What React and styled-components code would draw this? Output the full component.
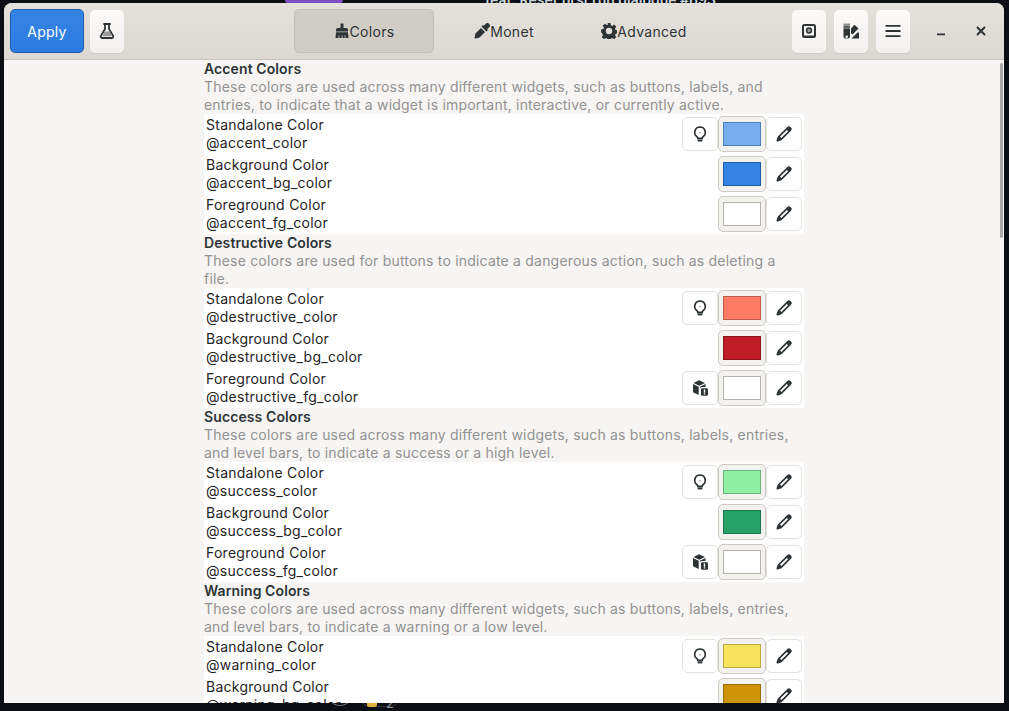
import React from 'react';
import styled, { createGlobalStyle } from 'styled-components';

const GlobalStyle = createGlobalStyle`
html, body {
    margin: 0;
    padding: 0;
    height: 100%;
    background: #0b0e13;
    overflow: hidden;
    font-family: Inter, "Noto Sans", sans-serif;
}
`;

const sections = [
    {
        title: 'Accent Colors',
        desc: 'These colors are used across many different widgets, such as buttons, labels, and entries, to indicate that a widget is important, interactive, or currently active.',
        rows: [
            { name: 'Standalone Color', variable: '@accent_color', hint: 'bulb', color: '#78aeed', edge: '#4a7fb8' },
            { name: 'Background Color', variable: '@accent_bg_color', color: '#3584e4', edge: '#1f5ca8' },
            { name: 'Foreground Color', variable: '@accent_fg_color', color: '#ffffff', edge: '#b5b3b0' },
        ],
    },
    {
        title: 'Destructive Colors',
        desc: 'These colors are used for buttons to indicate a dangerous action, such as deleting a file.',
        rows: [
            { name: 'Standalone Color', variable: '@destructive_color', hint: 'bulb', color: '#ff7b63', edge: '#c05c4a' },
            { name: 'Background Color', variable: '@destructive_bg_color', color: '#c01c28', edge: '#8c141d' },
            { name: 'Foreground Color', variable: '@destructive_fg_color', hint: 'box', color: '#ffffff', edge: '#b5b3b0' },
        ],
    },
    {
        title: 'Success Colors',
        desc: 'These colors are used across many different widgets, such as buttons, labels, entries, and level bars, to indicate a success or a high level.',
        rows: [
            { name: 'Standalone Color', variable: '@success_color', hint: 'bulb', color: '#8ff0a4', edge: '#6bb47b' },
            { name: 'Background Color', variable: '@success_bg_color', color: '#26a269', edge: '#1b774d' },
            { name: 'Foreground Color', variable: '@success_fg_color', hint: 'box', color: '#ffffff', edge: '#b5b3b0' },
        ],
    },
    {
        title: 'Warning Colors',
        desc: 'These colors are used across many different widgets, such as buttons, labels, entries, and level bars, to indicate a warning or a low level.',
        rows: [
            { name: 'Standalone Color', variable: '@warning_color', hint: 'bulb', color: '#f8e45c', edge: '#baab45' },
            { name: 'Background Color', variable: '@warning_bg_color', color: '#cd9309', edge: '#9a6e07' },
        ],
    },
];

const Icon = ({ children, size = 16 }) => (
    <svg width={size} height={size} viewBox="0 0 16 16" fill="#2e3436" aria-hidden="true">
        {children}
    </svg>
);

const FlaskIcon = () => (
    <Icon>
        <path d="M5 1h6M6 1v5L2 12.600c-.7 1.200.1 2.400 1.300 2.400h9.400c1.200 0 2-1.200 1.300-2.400L10 6V1" fill="none" stroke="#2e3436" strokeWidth="1.800" strokeLinecap="round" strokeLinejoin="round" />
        <path d="M5.400 8.500h5.200l2.200 4.700H3.200z" fill="#9a9a98" />
    </Icon>
);

const BrushIcon = () => (
    <Icon>
        <path d="M6.500 .5h3v4.500h2.800c.9 0 1.700.8 1.700 1.700V8.500H2V6.700C2 5.800 2.800 5 3.700 5h2.800z" />
        <path d="M2 9.300h12l.5 5.700h-3v-2.500h-.8V15H8.500v-2.500h-.8V15H5.300v-2.500h-.8V15H1.500z" />
    </Icon>
);

const DropperIcon = () => (
    <Icon>
        <path d="M9.800 2.800 11.800.8a2.300 2.300 0 0 1 3.300 0l.1.100a2.300 2.300 0 0 1 0 3.300l-2 2 .8.800-1.500 1.500L7.500 3.500 9 2z" />
        <path d="M7 5 11 9 5.500 14.500 2.800 15.300 1.200 15.500.6 14.900.8 13.300 1.500 10.500z" />
    </Icon>
);

const GearIcon = () => (
    <Icon>
        <path fillRule="evenodd" d="M6.500 0h3l.4 2.300 1.400.6 1.900-1.300 2.100 2.100-1.300 1.900.6 1.400 2.300.4v3l-2.300.4-.6 1.400 1.300 1.900-2.100 2.100-1.900-1.300-1.400.6-.4 2.300h-3l-.4-2.300-1.400-.6-1.900 1.300-2.100-2.100 1.300-1.900-.6-1.400L.1 9.500v-3l2.300-.4.6-1.400-1.300-1.900 2.100-2.100 1.900 1.300 1.400-.6zM8 4.800a3.200 3.200 0 1 0 0 6.400 3.200 3.200 0 0 0 0-6.400z" />
    </Icon>
);

const PaletteIcon = () => (
    <Icon>
        <path fillRule="evenodd" d="M.5 5.500h6.500v8a2 2 0 0 1-2 2H2.500a2 2 0 0 1-2-2zm3.200 6.900a1.300 1.300 0 1 0 0 2.600 1.300 1.300 0 0 0 0-2.600z" />
        <path d="M.5.500H7v2.500H.5z" fill="#8f8f8d" />
        <path d="M.5 3H7v2.500H.5z" fill="#5f6160" />
        <path d="M11.500 1.800 15.500 5.400 9.500 11.500 8 10.200V5.500z" />
        <path d="M16 9.500v6H8.500l6-6z" />
    </Icon>
);

const WallpaperIcon = () => (
    <Icon>
        <path fillRule="evenodd" d="M3.500 1h9A2.500 2.500 0 0 1 15 3.500v9a2.500 2.500 0 0 1-2.500 2.500h-9A2.500 2.500 0 0 1 1 12.500v-9A2.500 2.500 0 0 1 3.500 1zm-.5 2v9.500h10V3z" />
        <circle cx="8" cy="7.500" r="2.500" fill="#9a9a98" stroke="#2e3436" strokeWidth="1.400" />
    </Icon>
);

const MenuIcon = () => (
    <Icon>
        <path d="M.5 2h15v1.800H.5zM.5 7.100h15v1.800H.5zM.5 12.200h15V14H.5z" />
    </Icon>
);

const MinimizeIcon = () => (
    <Icon>
        <path d="M4 10.500h8v1.800H4z" />
    </Icon>
);

const CloseIcon = () => (
    <Icon>
        <path d="M4 4l8 8M12 4l-8 8" stroke="#2e3436" strokeWidth="2" fill="none" />
    </Icon>
);

const BulbIcon = () => (
    <Icon>
        <path d="M8 1a5.300 5.300 0 0 0-3.200 9.500c.7.600 1 1.100 1 1.800h4.400c0-.7.300-1.200 1-1.800A5.300 5.300 0 0 0 8 1z" fill="none" stroke="#2e3436" strokeWidth="1.700" />
        <path d="M5.600 13.400h4.800v2H5.600z" />
        <path d="M6.500 6h3L8 8z" fill="#b9b9b7" />
    </Icon>
);

const BoxIcon = () => (
    <Icon>
        <path d="M7 .3 13 3 7.300 5.700 1.500 3z" />
        <path d="M1 4.100 6.700 6.800V15L1 12.300z" />
        <path d="M7.900 6.800 13.500 4.100V7H10C8.800 7 7.900 7.900 7.900 9z" />
        <rect x="9" y="8.200" width="7" height="7.500" rx="1.200" />
        <path d="M11.800 9.600h1.400v3.100h-1.400zM11.800 13.200h1.400v1.200h-1.400z" fill="#fff" />
    </Icon>
);

const PencilIcon = () => (
    <Icon>
        <path fillRule="evenodd" d="M11.300 1a2.300 2.300 0 0 1 3.200 0l.5.500a2.300 2.300 0 0 1 0 3.200l-9.500 9.500-3.700 1.300a1 1 0 0 1-1.300-1.300l1.300-3.700zM4.100 10.600l1.300 1.300 6.700-6.700-1.300-1.300z" />
    </Icon>
);

const hintIcons = { bulb: <BulbIcon />, box: <BoxIcon /> };

const ColorRow = ({ name, variable, hint, color, edge }) => (
    <Row>
        <RowText>
            <div>{name}</div>
            <div>{variable}</div>
        </RowText>
        <Actions>
            {hint && <SmallButton>{hintIcons[hint]}</SmallButton>}
            <ColorButton>
                <Swatch $color={color} $edge={edge} />
            </ColorButton>
            <SmallButton>
                <PencilIcon />
            </SmallButton>
        </Actions>
    </Row>
);

const App = () => (
    <>
        <GlobalStyle />
        <Desktop>
            <PurpleStrip />
            <BehindTitle>feat: Reset first run dialogue #693</BehindTitle>
            <BehindAvatar />
            <BehindPill />
            <BehindBadge />
            <BehindCount>2</BehindCount>
            <Window>
                <Header>
                    <HeaderSide>
                        <ApplyButton>Apply</ApplyButton>
                        <HeaderButton><FlaskIcon /></HeaderButton>
                    </HeaderSide>
                    <Tabs>
                        <Tab $active><BrushIcon />Colors</Tab>
                        <Tab><DropperIcon />Monet</Tab>
                        <Tab><GearIcon />Advanced</Tab>
                    </Tabs>
                    <HeaderEnd>
                        <HeaderButton><WallpaperIcon /></HeaderButton>
                        <HeaderButton><PaletteIcon /></HeaderButton>
                        <HeaderButton><MenuIcon /></HeaderButton>
                        <WindowControls>
                            <WindowControl><MinimizeIcon /></WindowControl>
                            <WindowControl><CloseIcon /></WindowControl>
                        </WindowControls>
                    </HeaderEnd>
                </Header>
                <Content>
                    <Column>
                        {sections.map((section) => (
                            <section key={section.title}>
                                <SectionTitle>{section.title}</SectionTitle>
                                <SectionDesc>{section.desc}</SectionDesc>
                                {section.rows.map((row) => (
                                    <ColorRow key={row.variable} {...row} />
                                ))}
                            </section>
                        ))}
                    </Column>
                    <Scrollbar />
                </Content>
            </Window>
        </Desktop>
    </>
);

const Desktop = styled.div`
position: relative;
width: 1009px;
height: 711px;
background: #0b0e13;
overflow: hidden;
`;

const PurpleStrip = styled.div`
position: absolute;
top: 0;
left: 285px;
width: 58px;
height: 3px;
background: #7e4fc4;
border-radius: 0 0 6px 6px;
`;

const BehindTitle = styled.div`
position: absolute;
top: -9px;
left: 485px;
font-size: 14px;
font-weight: 600;
line-height: 18px;
white-space: nowrap;
color: #c9d1d9;
`;

const BehindAvatar = styled.div`
position: absolute;
top: 692px;
left: 330px;
width: 20px;
height: 14px;
box-sizing: border-box;
border: 1px solid #6b7079;
border-radius: 50%;
`;

const BehindPill = styled.div`
position: absolute;
top: 685px;
left: 359px;
width: 42px;
height: 22px;
box-sizing: border-box;
border: 1px solid #30363d;
border-radius: 11px;
`;

const BehindBadge = styled.div`
position: absolute;
top: 703px;
left: 367px;
width: 10px;
height: 4px;
background: #e3b341;
border-radius: 0 0 2px 2px;
`;

const BehindCount = styled.div`
position: absolute;
top: 694px;
left: 386px;
font-size: 13px;
line-height: 18px;
color: #8b949e;
clip-path: inset(9px 0 0 0);
`;

const Window = styled.div`
position: absolute;
top: 3px;
left: 4px;
width: 1000px;
height: 700px;
display: flex;
flex-direction: column;
background: #f6f5f3;
border-radius: 8px 8px 0 0;
overflow: hidden;
`;

const Header = styled.header`
flex: none;
height: 57px;
box-sizing: border-box;
display: grid;
grid-template-columns: 1fr auto 1fr;
align-items: center;
padding: 0 6px;
background: linear-gradient(#e4e1dd, #dcd9d5);
border-bottom: 1px solid #c5c1bb;
`;

const HeaderSide = styled.div`
display: flex;
align-items: center;
gap: 6px;
`;

const HeaderEnd = styled(HeaderSide)`
justify-content: flex-end;
gap: 8px;
`;

const ApplyButton = styled.button`
width: 74px;
height: 44px;
border: 1px solid #1b5cab;
border-radius: 5px;
background: linear-gradient(#3584e4, #2c7be0);
color: #ffffff;
font: 400 14px Inter, sans-serif;
letter-spacing: 0.25px;
`;

const HeaderButton = styled.button`
width: 34px;
height: 43px;
padding: 0;
display: flex;
align-items: center;
justify-content: center;
border: none;
border-radius: 5px;
background: linear-gradient(#fbfaf9, #f3f1ef);
box-shadow: 0 1px 1px #cfcbc6;
`;

const Tabs = styled.nav`
display: flex;
align-items: center;
`;

const Tab = styled.button`
width: 140px;
height: 44px;
padding: 0;
display: flex;
align-items: center;
justify-content: center;
box-sizing: border-box;
border: 1px solid ${(props) => (props.$active ? '#c3bfb8' : 'transparent')};
border-radius: 5px;
background: ${(props) => (props.$active ? '#d0ccc6' : 'transparent')};
color: #2e3436;
font: 400 14px Inter, sans-serif;
letter-spacing: 0.3px;
`;

const WindowControls = styled.div`
display: flex;
align-items: center;
gap: 16px;
margin-left: 11px;
margin-right: 5px;
`;

const WindowControl = styled.div`
width: 24px;
height: 24px;
display: flex;
align-items: center;
justify-content: center;
`;

const Content = styled.main`
flex: 1;
position: relative;
overflow: hidden;
display: flex;
justify-content: center;
background: #f6f5f3;
`;

const Column = styled.div`
width: 600px;
`;

const SectionTitle = styled.div`
font-size: 14px;
font-weight: 600;
line-height: 18px;
letter-spacing: 0.1px;
color: #2e3436;
`;

const SectionDesc = styled.div`
font-size: 14px;
line-height: 18px;
letter-spacing: 0.2px;
color: #929292;
`;

const Row = styled.div`
height: 40px;
box-sizing: border-box;
padding: 2px;
display: flex;
align-items: center;
justify-content: space-between;
background: #ffffff;
`;

const RowText = styled.div`
font-size: 14px;
line-height: 18px;
letter-spacing: 0.25px;
color: #1f2324;
`;

const Actions = styled.div`
display: flex;
align-items: center;
`;

const SmallButton = styled.button`
width: 36px;
height: 34px;
padding: 0;
display: flex;
align-items: center;
justify-content: center;
border: 1px solid #e4e2df;
border-radius: 5px;
background: #ffffff;
`;

const ColorButton = styled.button`
width: 48px;
height: 36px;
padding: 0;
display: flex;
align-items: center;
justify-content: center;
border: 1px solid #cdc9c3;
border-radius: 5px;
background: #f4f2ef;
`;

const Swatch = styled.span`
width: 38px;
height: 24px;
box-sizing: border-box;
border: 1px solid ${(props) => props.$edge};
background: ${(props) => props.$color};
`;

const Scrollbar = styled.div`
position: absolute;
top: 3px;
right: 1px;
width: 3px;
height: 175px;
border-radius: 2px;
background: #a8a8a6;
`;

export default App;
